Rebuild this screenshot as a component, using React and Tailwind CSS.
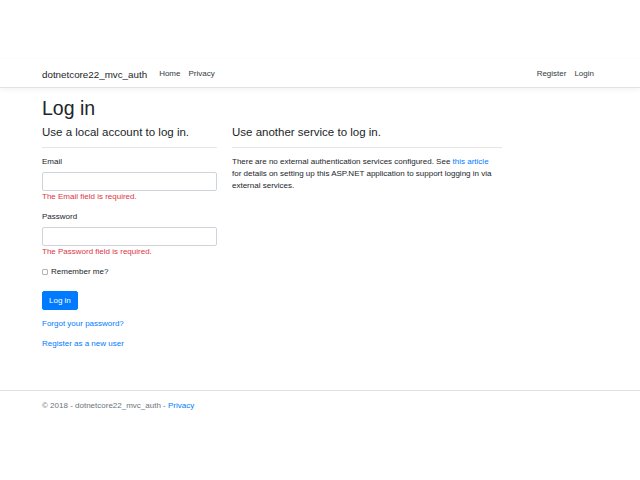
export default function App() {
  return (
    <div className="min-h-[480px] bg-white text-[#212529] relative font-['Liberation_Sans',Arial,sans-serif]">
      <div className="h-[59px]" />
      <nav className="h-[29px] border-b border-[#dee2e6] bg-white shadow-[0_2px_6px_rgba(0,0,0,0.05)]">
        <div className="w-[556px] pl-[0px] ml-[42px] h-full flex items-center">
          <a className="text-[9.8px] leading-[15px] mr-[8px] pt-[2px]">dotnetcore22_mvc_auth</a>
          <div className="flex flex-1 items-center text-[8px] leading-[12px] text-[#343a40] pt-[2px]">
            <a className="px-[4px]">Home</a>
            <a className="px-[4px]">Privacy</a>
            <div className="flex-1" />
            <a className="px-[4px]">Register</a>
            <a className="pl-[4px] pr-[4px]">Login</a>
          </div>
        </div>
      </nav>

      <main className="w-[556px] ml-[42px] pt-[8px]">
        <h1 className="text-[19.5px] leading-[24px] font-medium mb-[4px]">Log in</h1>
        <div className="flex gap-[15px]">
          <section className="w-[175px]">
            <h4 className="text-[11.5px] leading-[14px] font-medium mt-[1px]">Use a local account to log in.</h4>
            <hr className="mt-[8px] mb-[8px] border-t border-[rgba(0,0,0,0.1)]" />
            <div className="text-[8px] leading-[12px]">
              <div className="mb-[8px]">
                <label className="block mb-[4px]">Email</label>
                <div className="h-[19px] border border-[#ced4da] rounded-[2px] bg-white" />
                <div className="text-[#dc3545]">The Email field is required.</div>
              </div>
              <div className="mb-[8px]">
                <label className="block mb-[4px]">Password</label>
                <div className="h-[19px] border border-[#ced4da] rounded-[2px] bg-white" />
                <div className="text-[#dc3545]">The Password field is required.</div>
              </div>
              <div className="mb-[13px] flex items-center">
                <span className="inline-block w-[6px] h-[6px] border border-[#b5b5b5] rounded-[1px] mr-[3px]" />
                <span>Remember me?</span>
              </div>
              <button className="h-[19px] px-[6px] bg-[#007bff] text-white rounded-[2px] border border-[#007bff] text-[8px] leading-[12px] mb-[8px]">Log in</button>
              <p className="text-[#007bff] mb-[8px]">Forgot your password?</p>
              <p className="text-[#007bff] mb-[8px]">Register as a new user</p>
            </div>
          </section>
          <section className="w-[270px]">
            <h4 className="text-[11.5px] leading-[14px] font-medium mt-[1px]">Use another service to log in.</h4>
            <hr className="mt-[8px] mb-[8px] border-t border-[rgba(0,0,0,0.1)]" />
            <p className="text-[8px] leading-[12px]">
              There are no external authentication services configured. See <a className="text-[#007bff]">this article</a>
              <br />
              for details on setting up this ASP.NET application to support logging in via
              <br />
              external services.
            </p>
          </section>
        </div>
      </main>

      <footer className="absolute left-0 right-0 top-[390px] border-t border-[#dee2e6] h-[30px]">
        <div className="w-[556px] ml-[42px] text-[8px] leading-[30px] text-[#6c757d]">
          © 2018 - dotnetcore22_mvc_auth - <a className="text-[#007bff]">Privacy</a>
        </div>
      </footer>
    </div>
  );
}
